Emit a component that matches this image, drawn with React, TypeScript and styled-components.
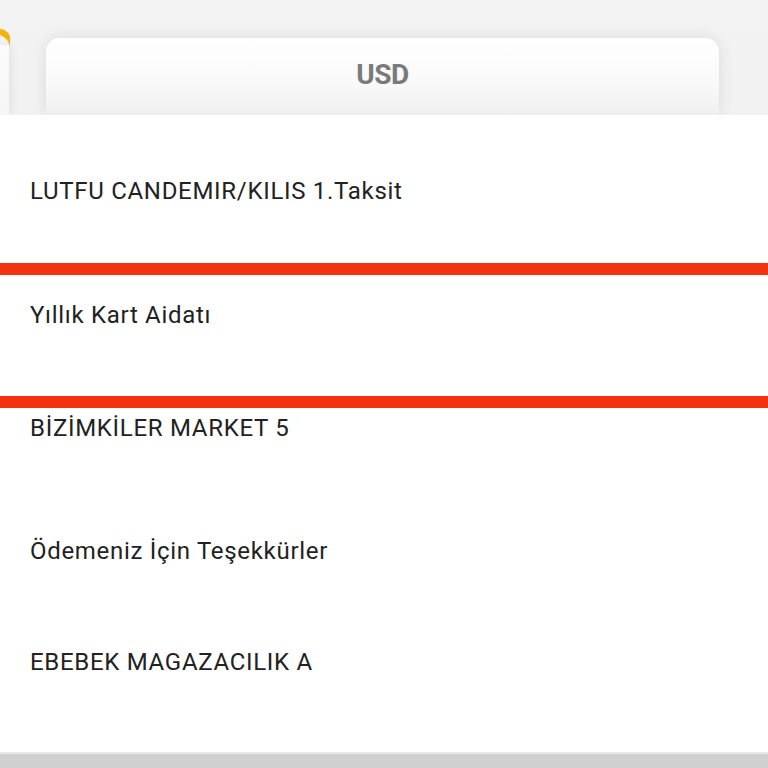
import React from "react";
import styled, { createGlobalStyle } from "styled-components";

const GlobalStyle = createGlobalStyle`
  html, body {
    margin: 0;
    padding: 0;
    background: #f1f1f1;
    font-family: Roboto, "Liberation Sans", Arial, sans-serif;
  }
  * { box-sizing: border-box; }
`;

const Screen = styled.div`
  width: 768px;
  height: 768px;
  overflow: hidden;
  display: flex;
  flex-direction: column;
  background: linear-gradient(#f3f3f3, #ececec);
`;

const TabStrip = styled.div`
  height: 115px;
  display: flex;
  align-items: flex-end;
  flex-shrink: 0;
`;

const SideTab = styled.div`
  position: relative;
  width: 9px;
  height: 70px;
  background: linear-gradient(#fbfbfb, #f6f6f6);
  box-shadow: 2px 0 10px rgba(0, 0, 0, 0.08);
`;

const Coin = styled.svg`
  position: absolute;
  left: 0;
  top: -20px;
  width: 12px;
  height: 24px;
`;

const Spacer = styled.div<{ $w: number }>`
  width: ${(p) => p.$w}px;
  flex-shrink: 0;
`;

const CurrencyTab = styled.div`
  width: 673px;
  height: 77px;
  border-radius: 14px 14px 0 0;
  background: linear-gradient(#ffffff 0%, #f9f9f9 60%, #efefef 100%);
  box-shadow: 0 0 16px rgba(0, 0, 0, 0.1);
  display: flex;
  align-items: center;
  justify-content: center;
  font-size: 28px;
  font-weight: 700;
  color: #7a7a7a;
  letter-spacing: -0.5px;
  padding-bottom: 4px;
`;

const Panel = styled.div`
  height: 637px;
  background: #ffffff;
  display: flex;
  flex-direction: column;
  flex-shrink: 0;
  position: relative;
  z-index: 1;
`;

const Row = styled.div<{ $h: number; $pt: number; $marked?: boolean }>`
  height: ${(p) => p.$h}px;
  padding: ${(p) => p.$pt}px 0 0 30px;
  border-top: ${(p) => (p.$marked ? "12px solid #f5320f" : "none")};
  border-bottom: ${(p) => (p.$marked ? "12px solid #f5320f" : "none")};
  font-size: 24px;
  line-height: 28px;
  letter-spacing: 0.7px;
  color: #222222;
  white-space: nowrap;
`;

const Footer = styled.div`
  flex: 1;
  background: #d0d0d0;
  border-top: 2px solid #e8e8e8;
`;

const rows = [
  { text: "LUTFU CANDEMIR/KILIS 1.Taksit", h: 148, pt: 62 },
  { text: "Yıllık Kart Aidatı", h: 145, pt: 26, marked: true },
  { text: "BİZİMKİLER MARKET 5", h: 123, pt: 6 },
  { text: "Ödemeniz İçin Teşekkürler", h: 111, pt: 6 },
  { text: "EBEBEK MAGAZACILIK A", h: 110, pt: 6 },
];

export default function App() {
  return (
    <>
      <GlobalStyle />
      <Screen>
        <TabStrip>
          <SideTab>
            <Coin viewBox="0 0 12 24">
              <path d="M0 4 A10 10 0 0 1 10 16 L10 22 A16 16 0 0 0 0 10 Z" fill="#f3b412" />
            </Coin>
          </SideTab>
          <Spacer $w={37} />
          <CurrencyTab>USD</CurrencyTab>
        </TabStrip>
        <Panel>
          {rows.map((r) => (
            <Row key={r.text} $h={r.h} $pt={r.pt} $marked={r.marked}>
              {r.text}
            </Row>
          ))}
        </Panel>
        <Footer />
      </Screen>
    </>
  );
}
